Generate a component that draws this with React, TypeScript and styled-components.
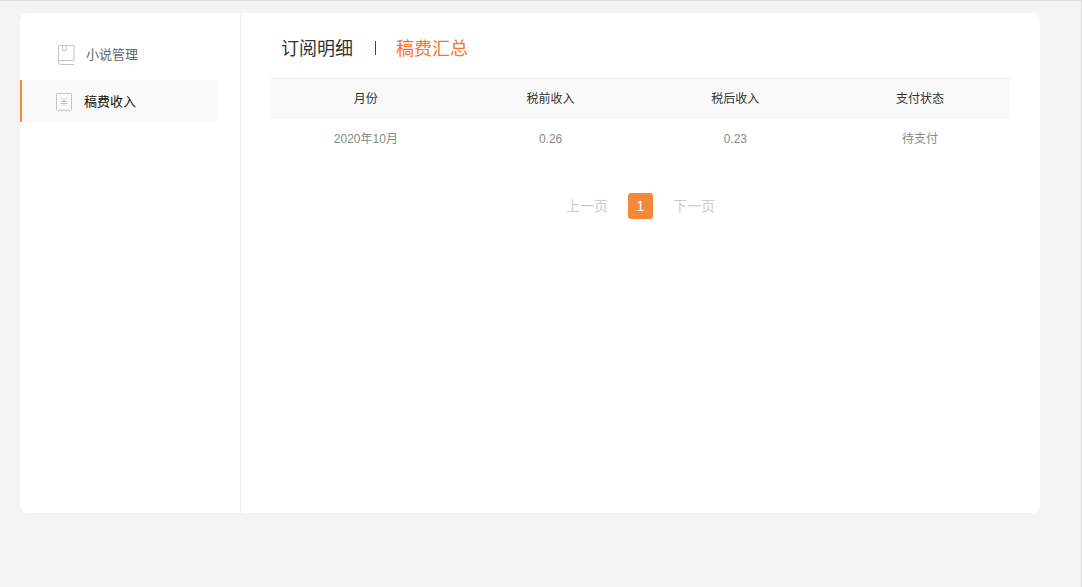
import React from 'react';
import styled, { createGlobalStyle } from 'styled-components';

const rows = [{ month: '2020年10月', before: '0.26', after: '0.23', status: '待支付' }];

const App: React.FC = () => {
  return (
    <>
      <GlobalStyle />
      <Page>
        <Card>
          <Sidebar>
            <NavItem>
              <NavIcon width="18" height="22" viewBox="0 0 18 22">
                <path d="M0.5 18V3.5a1 1 0 0 1 1-1h14.5v15H2.5a2 2 0 0 0 0 4H16" />
                <path d="M4.5 2.5v5h3.5v-5" />
              </NavIcon>
              <NavLabel>小说管理</NavLabel>
            </NavItem>
            <NavItem $active>
              <NavIcon width="18" height="22" viewBox="0 0 18 22">
                <path d="M0.5 19.5V3.5h15v16l-1.9 1.5-1.8-1.5-1.9 1.5L8 19.5 6.1 21l-1.9-1.5L2.4 21z" />
                <path d="M5 7.5 8 10.5l3-3M8 10.5V16M5 11.5h6M5 13.5h6" />
              </NavIcon>
              <NavLabel $active>稿费收入</NavLabel>
            </NavItem>
          </Sidebar>
          <Main>
            <Tabs>
              <Tab>订阅明细</Tab>
              <TabDivider />
              <Tab $active>稿费汇总</Tab>
            </Tabs>
            <Table>
              <thead>
                <tr>
                  <HeadCell>月份</HeadCell>
                  <HeadCell>税前收入</HeadCell>
                  <HeadCell>税后收入</HeadCell>
                  <HeadCell>支付状态</HeadCell>
                </tr>
              </thead>
              <tbody>
                {rows.map((row) => (
                  <tr key={row.month}>
                    <Cell>{row.month}</Cell>
                    <Cell>{row.before}</Cell>
                    <Cell>{row.after}</Cell>
                    <Cell>{row.status}</Cell>
                  </tr>
                ))}
              </tbody>
            </Table>
            <Pagination>
              <PageLink>上一页</PageLink>
              <PageNumber>1</PageNumber>
              <PageLink>下一页</PageLink>
            </Pagination>
          </Main>
        </Card>
      </Page>
    </>
  );
};

// Styled components
const GlobalStyle = createGlobalStyle`
  html, body {
    margin: 0;
    padding: 0;
    height: 100%;
    overflow: hidden;
    background: #f4f4f4;
    font-family: "Liberation Sans", "Noto Sans CJK SC", sans-serif;
  }
`;

const Page = styled.div`
  box-sizing: border-box;
  height: 587px;
  padding: 12px 0 0 20px;
  background: #f4f4f4;
  border-top: 1px solid #dcdcdc;
  border-right: 1px solid #dedede;
`;

const Card = styled.div`
  display: flex;
  width: 1020px;
  height: 500px;
  background: #fff;
  border-radius: 8px;
  overflow: hidden;
`;

const Sidebar = styled.aside`
  box-sizing: border-box;
  width: 221px;
  flex-shrink: 0;
  padding: 20px 22px 0 0;
  border-right: 1px solid #eeeeee;
`;

const NavItem = styled.div<{ $active?: boolean }>`
  box-sizing: border-box;
  display: flex;
  align-items: center;
  height: 42px;
  margin-bottom: 5px;
  padding-left: ${(p) => (p.$active ? '34px' : '38px')};
  border-left: ${(p) => (p.$active ? '2px solid #f98a3c' : 'none')};
  background: ${(p) => (p.$active ? '#fafafa' : 'transparent')};
  border-radius: 0 4px 4px 0;
`;

const NavIcon = styled.svg`
  flex-shrink: 0;
  fill: none;
  stroke: #c4c4c4;
  stroke-width: 1;
`;

const NavLabel = styled.span<{ $active?: boolean }>`
  margin-left: 10px;
  padding-bottom: 2px;
  font-size: 13px;
  color: ${(p) => (p.$active ? '#111' : '#666')};
`;

const Main = styled.main`
  flex: 1;
  padding: 0 30px;
`;

const Tabs = styled.div`
  display: flex;
  align-items: center;
  height: 65px;
  padding: 2px 0 0 10px;
  box-sizing: border-box;
`;

const Tab = styled.span<{ $active?: boolean }>`
  font-size: 18px;
  color: ${(p) => (p.$active ? '#f9742c' : '#333')};
`;

const TabDivider = styled.span`
  width: 1px;
  height: 14px;
  margin: 2px 20px 0 22px;
  background: #444;
`;

const Table = styled.table`
  width: 739px;
  border-collapse: collapse;
  table-layout: fixed;
`;

const HeadCell = styled.th`
  box-sizing: border-box;
  height: 40px;
  padding: 0 0 2px 5px;
  font-size: 12px;
  font-weight: 400;
  color: #333;
  background: #f9f9f9;
  border-top: 1px solid #ececec;
`;

const Cell = styled.td`
  box-sizing: border-box;
  height: 39px;
  padding: 1px 0 0 5px;
  font-size: 12px;
  line-height: 18px;
  text-align: center;
  color: #888;
`;

const Pagination = styled.div`
  display: flex;
  justify-content: center;
  align-items: center;
  gap: 20px;
  width: 739px;
  margin-top: 35px;
`;

const PageLink = styled.span`
  padding-bottom: 2px;
  font-size: 14px;
  color: #ccc;
`;

const PageNumber = styled.span`
  width: 25px;
  height: 26px;
  line-height: 26px;
  text-align: center;
  font-size: 14px;
  color: #fff;
  background: #f5893b;
  border-radius: 3px;
`;

export default App;
